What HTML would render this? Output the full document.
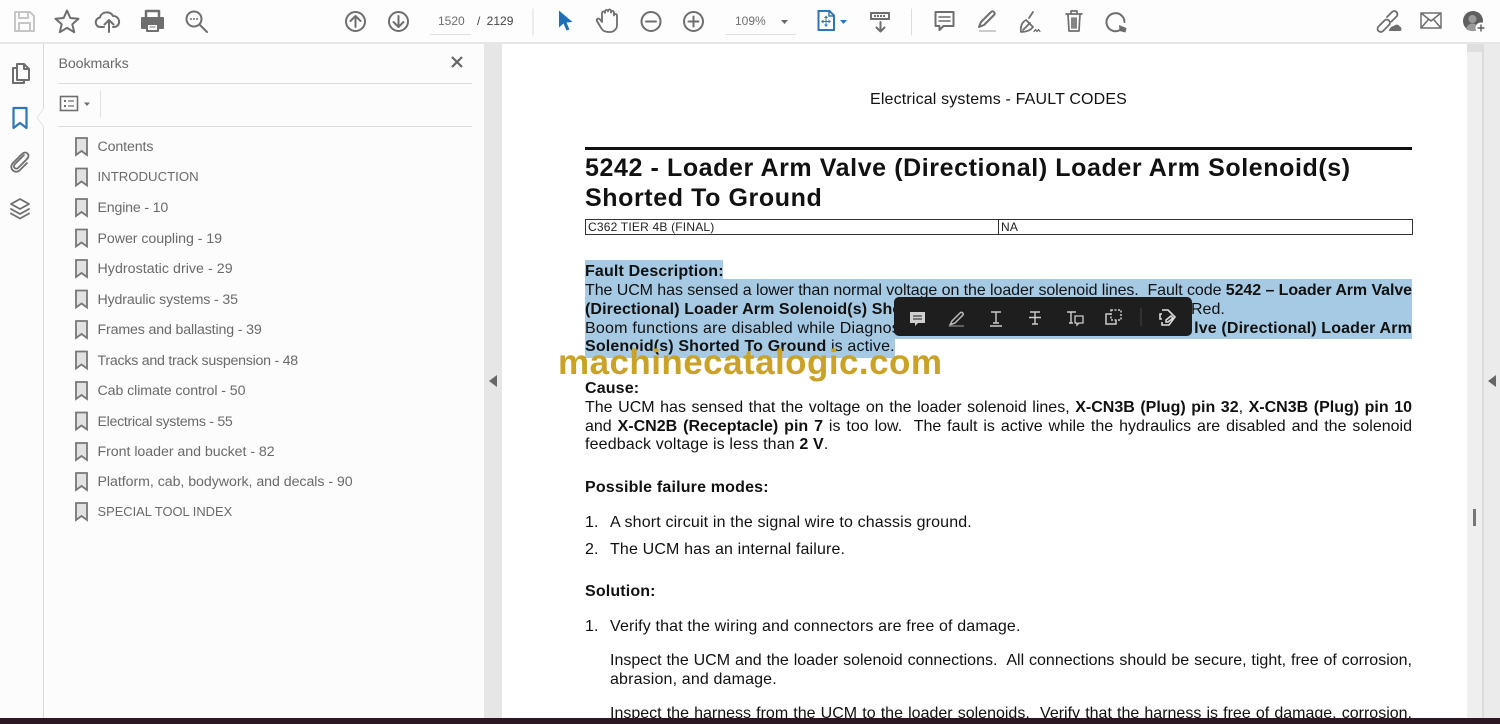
<!DOCTYPE html>
<html><head><meta charset="utf-8"><style>
html,body{margin:0;padding:0}
body{width:1500px;height:724px;position:relative;overflow:hidden;background:#fff;font-family:"Liberation Sans",sans-serif}
.a{position:absolute}
.l{position:absolute;left:585px;width:827px;height:20px;line-height:20px;font-size:16px;color:#111;white-space:nowrap;letter-spacing:.15px}
.j{text-align:justify;text-align-last:justify;letter-spacing:0}
.b{position:absolute;left:97.5px;font-size:14.2px;line-height:18px;color:#6a6a6a;white-space:nowrap}
svg{position:absolute;overflow:visible}
.i{fill:none;stroke:#6e6e6e;stroke-width:2;stroke-linecap:round;stroke-linejoin:round}
</style></head><body>
<!-- backgrounds -->
<div class="a" style="left:0;top:0;width:1500px;height:42px;background:#fdfdfd"></div>
<div class="a" style="left:0;top:42px;width:1500px;height:2px;background:#e6e6e6"></div>
<div class="a" style="left:0;top:44px;width:43px;height:680px;background:#fcfcfc"></div>
<div class="a" style="left:43px;top:44px;width:1px;height:680px;background:#d8d8d8"></div>
<div class="a" style="left:44px;top:44px;width:440px;height:680px;background:#fcfcfc"></div>
<div class="a" style="left:484px;top:44px;width:18px;height:680px;background:#e6e6e6"></div>
<div class="a" style="left:1467px;top:44px;width:33px;height:680px;background:#efefef"></div>
<div class="a" style="left:1482px;top:44px;width:2px;height:680px;background:#dcdcdc"></div>
<div class="a" style="left:1484px;top:44px;width:16px;height:680px;background:#ebebeb"></div>
<div class="a" style="left:1467px;top:44px;width:15px;height:8px;background:#dedede"></div>

<!-- top toolbar icons -->
<svg style="left:0;top:0" width="1500" height="44" viewBox="0 0 1500 44">
<g class="i">
<g style="stroke:#c6c6c6"><path d="M15 12h15l4 4v15H15z"/><path d="M19 12v6h9v-6M19 31v-8h11v8"/></g>
<path d="M67 10.500l3.300 7.500 8.200.8-6.200 5.400 1.900 8-7.200-4.300-7.200 4.300 1.900-8-6.200-5.400 8.200-.8z"/>
<path d="M104 27h-3.500c-6 0-6.500-8.500-.5-9.500 1-5.500 10-7.500 13-1.500 6.500-.5 9 9.500 1.500 11H113"/><path d="M109 32V20M104.500 24.500L109 20l4.500 4.500"/>
<path d="M146 17v-6h13v6" style="stroke-width:2.500"/>
<path d="M146 28h-4V18h21v10h-4" style="fill:#6e6e6e"/><path d="M147 24h11v7h-11z" style="fill:#fdfdfd"/><path d="M150 27h5" style="stroke-width:1"/>
<circle cx="194" cy="19" r="7.500"/><path d="M200 25l7 7"/>
<circle cx="355.500" cy="21.500" r="9.500"/><path d="M355.500 27V16M350.500 21l5-5 5 5"/>
<circle cx="398.500" cy="21.500" r="9.500"/><path d="M398.500 16v11M393.500 22l5 5 5-5"/>
<path d="M533 9v26" style="stroke:#dcdcdc;stroke-width:1"/>
<path d="M609 32c-5 0-7-2-8.500-5l-3.500-6c-1-2 1.500-3.500 3-1.500l2 2.500V13c0-2 3-2 3 0v-1.500c0-2 3-2 3 0V11c0-2 3-2 3 0v1.500c0-2 3-2 3 0v3c0-2 3-2 3 0V25c0 4-3 7-7 7z" style="stroke-width:1.800"/>
<circle cx="651" cy="21.500" r="9.500"/><path d="M646 21.500h10"/>
<circle cx="693.500" cy="21.500" r="9.500"/><path d="M688.500 21.500h10M693.500 16.500v10"/>
<path d="M911.500 9v26" style="stroke:#dcdcdc;stroke-width:1"/>
<path d="M871 13h18v6h-18z"/><path d="M880.500 22v9M876.500 27.500l4 4 4-4"/>
<path d="M935.500 12h18v14h-10l-4 4v-4h-4z"/><path d="M939 17h11M939 21h11" style="stroke-width:1.500"/>
<path d="M979 27l2-5 10-10c2-2 5 1 3 3l-10 10z"/>
<path d="M1026 20l7 7c-3 4-8 5-12 5-1-5 1-10 5-12zM1029 18l4-6M1030 23l-7 7" style="stroke-width:1.800"/>
<path d="M1034 31.500l1.500-2 1.500 2 1.500-2 1.500 2" style="stroke-width:1.200"/>
<path d="M1066 14h16M1071 14v-3h6v3M1068 14l1 17h10l1-17M1072 18v10M1074 18v10M1076 18v10" style="stroke-width:1.700"/>
<path d="M1120 30a9 9 0 1 1 4.500-8"/>
<path d="M1378.500 26.500l6-6c3-3 7.500 1.500 4.500 4.500l-6 6c-3 3-7.500-1.500-4.500-4.500zM1387 17l5-5c3-3 7.500 1.500 4.500 4.500l-5 5" style="stroke-width:1.800"/>
<path d="M1421 13h20v15h-20zM1421 13l10 8 10-8M1421 28l7-8M1441 28l-7-8" style="stroke-width:1.500"/>
</g>
<path d="M1119 25l7.500 3-1 4.500-6-1.500z" fill="#6e6e6e"/>
<path d="M1389 31c0-3 3-5 5-5 1-2 5-2 6 1 2 0 2 4 0 4z" fill="#6e6e6e"/>
<circle cx="1473" cy="21" r="10" fill="#5f5f5f"/>
<circle cx="1472.500" cy="19" r="4" fill="#9a9a9a"/>
<path d="M1466 29c1-4 4-5.500 6.500-5.500s5 1.500 6 4l-4 3.500c-3 .5-6 0-8.500-2z" fill="#9a9a9a"/>
<circle cx="1481" cy="28" r="5.500" fill="#fdfdfd"/>
<path d="M1481 24.500v7M1477.500 28h7" stroke="#5f5f5f" stroke-width="1.500"/>
<path d="M559 10.500v17l4.500-4 3 7 3-1-3-7 6-.5z" fill="#1d6fb8"/>
<g fill="none" stroke="#2e76ba" stroke-width="2"><path d="M818.500 11h11l4.500 4.500V30h-15.500z"/><path d="M829 11v5h5" stroke-width="1.500"/><path d="M826 18v7M822.500 21.500h7" stroke-width="1"/></g>
<path d="M826 15.500l2 2.500h-4zM826 27l2-2.500h-4zM821 21.500l2.500-2v4zM831 21.500l-2.500-2v4z" fill="#2e76ba"/>
<path d="M840 20h7l-3.500 4z" fill="#2e76ba"/>
<path d="M781 20h7l-3.500 4z" fill="#666"/>
<rect x="430" y="34" width="41" height="1" fill="#e0e0e0"/>
<rect x="725" y="34" width="71" height="1" fill="#e0e0e0"/>
<path d="M979 31h17" stroke="#ccc" stroke-width="2"/>
<path d="M874 16h12" stroke="#6e6e6e" stroke-width="2" stroke-dasharray="2 1"/>
<circle cx="191" cy="19" r="1" fill="#6e6e6e"/><circle cx="194" cy="19" r="1" fill="#6e6e6e"/><circle cx="197" cy="19" r="1" fill="#6e6e6e"/>
</svg>
<div class="a" style="left:438px;top:14px;font-size:12px;line-height:15px;color:#6e6e6e">1520</div>
<div class="a" style="left:477px;top:14px;font-size:12px;line-height:15px;color:#444;word-spacing:3px">/ 2129</div>
<div class="a" style="left:735px;top:14px;font-size:12px;line-height:15px;color:#6e6e6e">109%</div>

<!-- left rail -->
<svg style="left:0;top:44px" width="44" height="200" viewBox="0 44 44 200">
<g class="i">
<path d="M17 64h7l5 5v11H17zM24 64v5h5M17 68h-4v15h11v-3"/>
<path d="M13.500 108h13v20l-6.500-5-6.500 5z" style="stroke:#2e76ba;stroke-width:2.200"/>
<path d="M24 155l-9 9c-3 3 1 6 3 4l9-9c4-4-1-9-5-5l-9 9c-5 5 2 12 7 7l7-7" style="stroke-width:1.800"/>
<path d="M20 199l9 5-9 5-9-5zM11 209l9 5 9-5M11 213.500l9 5 9-5" style="stroke-width:1.800"/>
</g>
</svg>
<svg style="left:34px;top:108px" width="12" height="20"><path d="M10 0L3 9.500l7 9.500" fill="#fcfcfc" stroke="#e4e4e4"/></svg>

<!-- bookmarks panel -->
<div class="a" style="left:58.500px;top:55px;font-size:14.200px;line-height:18px;color:#6a6a6a;letter-spacing:-.1px">Bookmarks</div>
<svg style="left:450px;top:55px" width="14" height="14"><path d="M2 2l10 10M12 2L2 12" stroke="#666" stroke-width="2.200"/></svg>
<div class="a" style="left:58px;top:83px;width:414px;height:1px;background:#dcdcdc"></div>
<div class="a" style="left:58px;top:126px;width:414px;height:1px;background:#dcdcdc"></div>
<div class="a" style="left:100px;top:90px;width:1px;height:28px;background:#e0e0e0"></div>
<svg style="left:59px;top:95px" width="34" height="18"><rect x="1.500" y="1.500" width="17" height="14" fill="none" stroke="#6e6e6e" stroke-width="1.600"/><path d="M5 5h2v2H5zM5 10h2v2H5z" fill="#6e6e6e"/><path d="M9 6h6M9 11h6" stroke="#6e6e6e" stroke-width="1.300"/><path d="M25 7.500h6l-3 3.500z" fill="#6e6e6e"/></svg>

<svg style="left:74px;top:136px" width="16" height="390" viewBox="0 0 16 390">
<defs><path id="bk" d="M2 1h11v17l-5.500-4L2 18z" fill="#e2e2e2" stroke="#777" stroke-width="1.800"/></defs>
<use href="#bk" y="1"/><use href="#bk" y="31.500"/><use href="#bk" y="62"/><use href="#bk" y="92.500"/><use href="#bk" y="123"/><use href="#bk" y="153.500"/><use href="#bk" y="184"/><use href="#bk" y="214.500"/><use href="#bk" y="245"/><use href="#bk" y="275.500"/><use href="#bk" y="306"/><use href="#bk" y="336"/><use href="#bk" y="366"/>
</svg>
<div class="b" style="top:138px;letter-spacing:-.12px">Contents</div>
<div class="b" style="top:168px;font-size:13.2px">INTRODUCTION</div>
<div class="b" style="top:199px;letter-spacing:-.18px">Engine - 10</div>
<div class="b" style="top:229.500px;letter-spacing:-.05px">Power coupling - 19</div>
<div class="b" style="top:260px;letter-spacing:.05px">Hydrostatic drive - 29</div>
<div class="b" style="top:290.500px;letter-spacing:-.14px">Hydraulic systems - 35</div>
<div class="b" style="top:321px;letter-spacing:-.15px">Frames and ballasting - 39</div>
<div class="b" style="top:351.500px;letter-spacing:-.25px">Tracks and track suspension - 48</div>
<div class="b" style="top:382px;letter-spacing:-.08px">Cab climate control - 50</div>
<div class="b" style="top:412.500px;letter-spacing:-.3px">Electrical systems - 55</div>
<div class="b" style="top:443px;letter-spacing:-.04px">Front loader and bucket - 82</div>
<div class="b" style="top:473px;letter-spacing:-.05px">Platform, cab, bodywork, and decals - 90</div>
<div class="b" style="top:503px;font-size:12.9px">SPECIAL TOOL INDEX</div>

<!-- collapse arrows -->
<svg style="left:488px;top:375px" width="10" height="12"><path d="M9 0v12L1 6z" fill="#666"/></svg>
<svg style="left:1487px;top:375px" width="10" height="12"><path d="M9 0v12L1 6z" fill="#666"/></svg>
<div class="a" style="left:1473px;top:509px;width:3px;height:17px;background:#777"></div>

<!-- selection highlight -->
<div class="a" style="left:585px;top:260px;width:138px;height:20px;background:#a6cae3"></div>
<div class="a" style="left:585px;top:279px;width:827px;height:60px;background:#a6cae3"></div>
<div class="a" style="left:585px;top:339px;width:310px;height:19px;background:#a6cae3"></div>

<!-- document -->
<div class="l" style="left:870px;width:auto;top:90px;letter-spacing:.16px">Electrical systems - FAULT CODES</div>
<div class="a" style="left:585px;top:147px;width:827px;height:3px;background:#111"></div>
<div class="l" style="top:153px;height:30px;line-height:30px;font-size:25px;font-weight:bold;letter-spacing:.59px">5242 - Loader Arm Valve (Directional) Loader Arm Solenoid(s)</div>
<div class="l" style="top:183px;height:30px;line-height:30px;font-size:25px;font-weight:bold;letter-spacing:.59px">Shorted To Ground</div>
<div class="a" style="left:585px;top:219px;width:826px;height:14px;border:1px solid #333"></div>
<div class="a" style="left:998px;top:219px;width:1px;height:15px;background:#333"></div>
<div class="l" style="left:588px;width:auto;top:217px;font-size:12px;color:#222;letter-spacing:.2px">C362 TIER 4B (FINAL)</div>
<div class="l" style="left:1001px;width:auto;top:217px;font-size:12px;color:#222">NA</div>

<div class="l" style="top:262px;font-weight:bold">Fault Description:</div>
<div class="l j" style="top:281px;letter-spacing:-.08px">The UCM has sensed a lower than normal voltage on the loader solenoid lines.&nbsp; Fault code <b>5242 – Loader Arm Valve</b></div>
<div class="l" style="top:300px;font-weight:bold;letter-spacing:.1px">(Directional) Loader Arm Solenoid(s) Shorted To</div>
<div class="l" style="left:1191px;width:auto;top:300px;letter-spacing:0">Red.</div>
<div class="l" style="top:319px;letter-spacing:.22px">Boom functions are disabled while Diagnostic</div>
<div class="l" style="left:auto;right:88px;width:auto;top:319px;font-weight:bold;letter-spacing:.15px">lve (Directional) Loader Arm</div>
<div class="l" style="top:337px;letter-spacing:.15px"><b>Solenoid(s) Shorted To Ground</b> is active.</div>

<div class="l" style="top:379px;font-weight:bold">Cause:</div>
<div class="l j" style="top:398px">The UCM has sensed that the voltage on the loader solenoid lines, <b>X-CN3B (Plug) pin 32</b>, <b>X-CN3B (Plug) pin 10</b></div>
<div class="l j" style="top:417px">and <b>X-CN2B (Receptacle) pin 7</b> is too low.&nbsp; The fault is active while the hydraulics are disabled and the solenoid</div>
<div class="l" style="top:435px">feedback voltage is less than <b>2 V</b>.</div>
<div class="l" style="top:478px;font-weight:bold;letter-spacing:.18px">Possible failure modes:</div>
<div class="l" style="top:513px">1.</div><div class="l" style="left:610px;width:auto;top:513px">A short circuit in the signal wire to chassis ground.</div>
<div class="l" style="top:540px">2.</div><div class="l" style="left:610px;width:auto;top:540px">The UCM has an internal failure.</div>
<div class="l" style="top:582px;font-weight:bold">Solution:</div>
<div class="l" style="top:617px">1.</div><div class="l" style="left:610px;width:auto;top:617px">Verify that the wiring and connectors are free of damage.</div>
<div class="l j" style="left:610px;width:802px;top:651px">Inspect the UCM and the loader solenoid connections.&nbsp; All connections should be secure, tight, free of corrosion,</div>
<div class="l" style="left:610px;width:auto;top:670px">abrasion, and damage.</div>
<div class="l j" style="left:610px;width:802px;top:704px">Inspect the harness from the UCM to the loader solenoids.&nbsp; Verify that the harness is free of damage, corrosion,</div>

<!-- floating dark toolbar -->
<div class="a" style="left:894px;top:297px;width:298px;height:39px;background:#1e1e1e;border-radius:5px"></div>
<svg style="left:894px;top:297px" width="298" height="39" viewBox="894 297 298 39">
<path d="M910 312h15v11h-7l-3 3v-3h-5z" fill="#cfcfcf"/><path d="M913 316h9M913 319h9" stroke="#1e1e1e" stroke-width="1"/>
<path d="M950 325l2-4 8-8c2-2 4 1 3 2l-8 8z" fill="none" stroke="#bbb" stroke-width="1.500"/><path d="M949 326h15" stroke="#777" stroke-width="1.500"/>
<path d="M991 312h10M996 312v11M993 323h6M990 326h12" fill="none" stroke="#ccc" stroke-width="1.400"/>
<path d="M1030 312h10M1035 312v12M1032 324h6M1029 317.500h12" fill="none" stroke="#ccc" stroke-width="1.400"/>
<path d="M1067 312h9M1071 312v11M1069 323h4" fill="none" stroke="#ccc" stroke-width="1.400"/><path d="M1075 316h8v7h-4l-2 2v-2h-2z" fill="none" stroke="#ccc" stroke-width="1.300"/>
<path d="M1111 310h10v10h-10z" fill="none" stroke="#ccc" stroke-width="1.500" stroke-dasharray="2 1.500"/><path d="M1111 314h-5v10h10v-4" fill="none" stroke="#ccc" stroke-width="1.500"/>
<path d="M1141 308v18" stroke="#444" stroke-width="1"/>
<path d="M1162 310h6l7 7-6 8h-7v-3M1162 314h-2v5h2M1166 320l5-4 2 2-5 4h-2z" fill="none" stroke="#ddd" stroke-width="1.600"/>
</svg>

<!-- watermark -->
<div class="a" style="left:558px;top:342px;font-size:35px;line-height:42px;font-weight:bold;color:#c9a227;white-space:nowrap;letter-spacing:.45px">machinecatalogic.com</div>

<!-- bottom strip -->
<div class="a" style="left:0;top:718px;width:1500px;height:6px;background:#2b1822"></div>
</body></html>
